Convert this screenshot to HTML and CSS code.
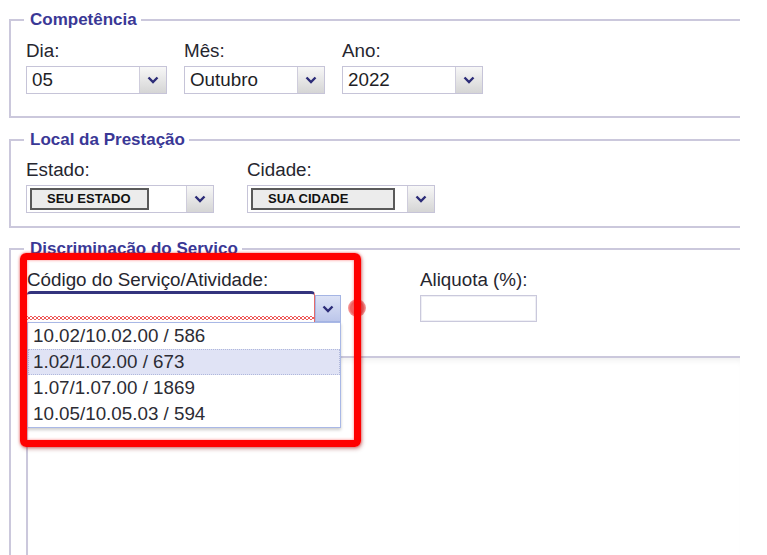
FILE: index.html
```html
<!DOCTYPE html>
<html lang="pt-BR">
<head>
<meta charset="utf-8">
<title>Serviço</title>
<link rel="stylesheet" href="styles.css">
</head>
<body>
<div class="page">
  <fieldset class="group g1">
    <legend>Competência</legend>
    <div class="row row-date">
      <div class="field">
        <span class="lbl">Dia:</span>
        <div class="select"><span class="val">05</span><span class="arrow"><svg width="12" height="8" viewBox="0 0 12 8"><polyline points="1.5,1.5 6,6 10.5,1.5" fill="none" stroke="#2c2c78" stroke-width="2.4"/></svg></span></div>
      </div>
      <div class="field">
        <span class="lbl">Mês:</span>
        <div class="select"><span class="val">Outubro</span><span class="arrow"><svg width="12" height="8" viewBox="0 0 12 8"><polyline points="1.5,1.5 6,6 10.5,1.5" fill="none" stroke="#2c2c78" stroke-width="2.4"/></svg></span></div>
      </div>
      <div class="field">
        <span class="lbl">Ano:</span>
        <div class="select"><span class="val">2022</span><span class="arrow"><svg width="12" height="8" viewBox="0 0 12 8"><polyline points="1.5,1.5 6,6 10.5,1.5" fill="none" stroke="#2c2c78" stroke-width="2.4"/></svg></span></div>
      </div>
    </div>
  </fieldset>

  <fieldset class="group g2">
    <legend>Local da Prestação</legend>
    <div class="row row-local">
      <div class="field">
        <span class="lbl">Estado:</span>
        <div class="select wide"><span class="pick pick-estado">SEU ESTADO</span><span class="fill"></span><span class="arrow"><svg width="12" height="8" viewBox="0 0 12 8"><polyline points="1.5,1.5 6,6 10.5,1.5" fill="none" stroke="#2c2c78" stroke-width="2.4"/></svg></span></div>
      </div>
      <div class="field">
        <span class="lbl">Cidade:</span>
        <div class="select wide"><span class="pick pick-cidade">SUA CIDADE</span><span class="fill"></span><span class="arrow"><svg width="12" height="8" viewBox="0 0 12 8"><polyline points="1.5,1.5 6,6 10.5,1.5" fill="none" stroke="#2c2c78" stroke-width="2.4"/></svg></span></div>
      </div>
    </div>
  </fieldset>

  <fieldset class="group g3">
    <legend>Discriminação do Serviço</legend>
    <div class="row row-serv">
      <div class="field field-code">
        <span class="lbl lbl-code">Código do Serviço/Atividade:</span>
        <div class="combo">
          <span class="cinput"></span>
          <span class="cbtn"><svg width="12" height="8" viewBox="0 0 12 8"><polyline points="1.5,1.5 6,6 10.5,1.5" fill="none" stroke="#2c2c78" stroke-width="2.4"/></svg></span>
          <ul class="dlist">
            <li class="item">10.02/10.02.00 / 586</li>
            <li class="item active">1.02/1.02.00 / 673</li>
            <li class="item">1.07/1.07.00 / 1869</li>
            <li class="item">10.05/10.05.03 / 594</li>
          </ul>
        </div>
      </div>
      <span class="dot"></span>
      <div class="field field-aliq">
        <span class="lbl">Aliquota (%):</span>
        <span class="tinput"></span>
      </div>
    </div>
    <div class="subpanel"></div>
  </fieldset>

  <div class="annot"></div>
</div>
</body>
</html>
```
FILE: styles.css
```css
html, body {
  margin: 0;
  height: 555px;
  overflow: hidden;
  background: #ffffff;
}
body {
  font-family: "Liberation Sans", Arial, sans-serif;
  color: #26262f;
}
.page {
  position: relative;
  padding-top: 10px;
}
.group {
  margin: 0 0 0 9px;
  width: 731px;
  box-sizing: border-box;
  border: 2px solid #cbc8dc;
  border-right: none;
  padding: 10px 0 0 15px;
  min-width: 0;
}
.group legend {
  font-size: 17px;
  font-weight: bold;
  color: #3a3896;
  line-height: 20px;
  padding: 0 4px 0 6px;
  margin-left: -2px;
}
.g1 { padding-bottom: 22px; }
.g2 { margin-top: 12px; padding-top: 9px; padding-bottom: 13px; }
.g3 { margin-top: 11px; border-bottom: none; }

.row { display: flex; align-items: flex-start; }
.row-date { gap: 17px; }
.row-local { gap: 33px; }

.field { display: flex; flex-direction: column; }
.lbl {
  font-size: 18.8px;
  line-height: 22px;
  margin-bottom: 4px;
  color: #26262f;
}
.lbl-code { margin-bottom: 0; margin-left: 1px; }

.select {
  display: flex;
  width: 141px;
  height: 28px;
  box-sizing: border-box;
  border: 1px solid #c6c4d8;
  background: #fff;
  font-size: 18.8px;
}
.select.wide { width: 188px; }
.val {
  flex: 1;
  padding-left: 5px;
  line-height: 26px;
  color: #1e1e26;
}
.arrow {
  width: 26px;
  flex: none;
  border-left: 1px solid #cfcddc;
  background: linear-gradient(#f7f7f7, #d5d5d5);
  display: flex;
  align-items: center;
  justify-content: center;
}
.fill { flex: 1; }
.pick {
  margin: 2px 0 2px 3px;
  box-sizing: border-box;
  border: 2px solid #5a5a5a;
  background: #ececec;
  font-size: 13px;
  font-weight: bold;
  color: #111;
  padding-left: 15px;
  line-height: 18px;
  flex: none;
}
.pick-estado { width: 119px; }
.pick-cidade { width: 144px; }

.field-code { width: 315px; }
.combo {
  position: relative;
  display: flex;
  align-items: flex-end;
  height: 31px;
  margin-left: 1px;
}
.cinput {
  width: 288px;
  height: 31px;
  box-sizing: border-box;
  border-top: 3px solid #34347e;
  border-right: 1px solid #e46b6b;
  border-radius: 4px 4px 0 0;
  background-color: #fff;
  background-image:
    linear-gradient(45deg, transparent 40%, #ee5a5a 40%, #ee5a5a 60%, transparent 60%),
    linear-gradient(-45deg, transparent 40%, #ee5a5a 40%, #ee5a5a 60%, transparent 60%);
  background-size: 4px 4px;
  background-repeat: repeat-x;
  background-position: 0 calc(100% - 2px);
}
.cbtn {
  width: 26px;
  height: 27px;
  box-sizing: border-box;
  border: 1px solid #a5b5e4;
  background: linear-gradient(#dde3f6, #bcc6ea);
  display: flex;
  align-items: center;
  justify-content: center;
}
.dlist {
  position: absolute;
  top: 100%;
  left: 0;
  width: 314px;
  box-sizing: border-box;
  margin: 0;
  padding: 0;
  list-style: none;
  border: 1px solid #a9b8e6;
  background: #fff;
  box-shadow: 0 2px 3px rgba(0, 0, 0, 0.2);
  z-index: 3;
}
.item {
  height: 26px;
  box-sizing: border-box;
  line-height: 24px;
  padding-left: 4px;
  font-size: 18.8px;
  color: #2c2c34;
  border: 1px dotted transparent;
}
.item.active {
  background: #e0e3f5;
  border-color: #b0b8dc;
}
.dot {
  width: 18px;
  height: 18px;
  flex: none;
  margin: 30px 0 0 7px;
  border-radius: 50%;
  background: radial-gradient(circle, #f47c7c 0%, #ef6262 50%, rgba(240, 100, 100, 0) 100%);
}
.field-aliq { margin-left: 54px; }
.tinput {
  width: 117px;
  height: 27px;
  box-sizing: border-box;
  border: 1px solid #cac9dc;
  box-shadow: inset 0 0 0 1px #efeff5;
  background: #fff;
}
.subpanel {
  margin-top: 34px;
  height: 197px;
  border-top: 2px solid #cbc8dc;
  border-left: 2px solid #cbc8dc;
  box-shadow: inset 0 6px 6px -4px rgba(0, 0, 0, 0.07);
}
.annot {
  position: absolute;
  left: 20px;
  top: 253px;
  width: 341px;
  height: 194px;
  box-sizing: border-box;
  border: 7px solid #ff0000;
  border-radius: 6px;
  box-shadow: 1px 2px 4px rgba(120, 0, 0, 0.35), 0 0 3px rgba(255, 0, 0, 0.6), inset 0 0 3px rgba(255, 0, 0, 0.5);
  z-index: 5;
}
```
